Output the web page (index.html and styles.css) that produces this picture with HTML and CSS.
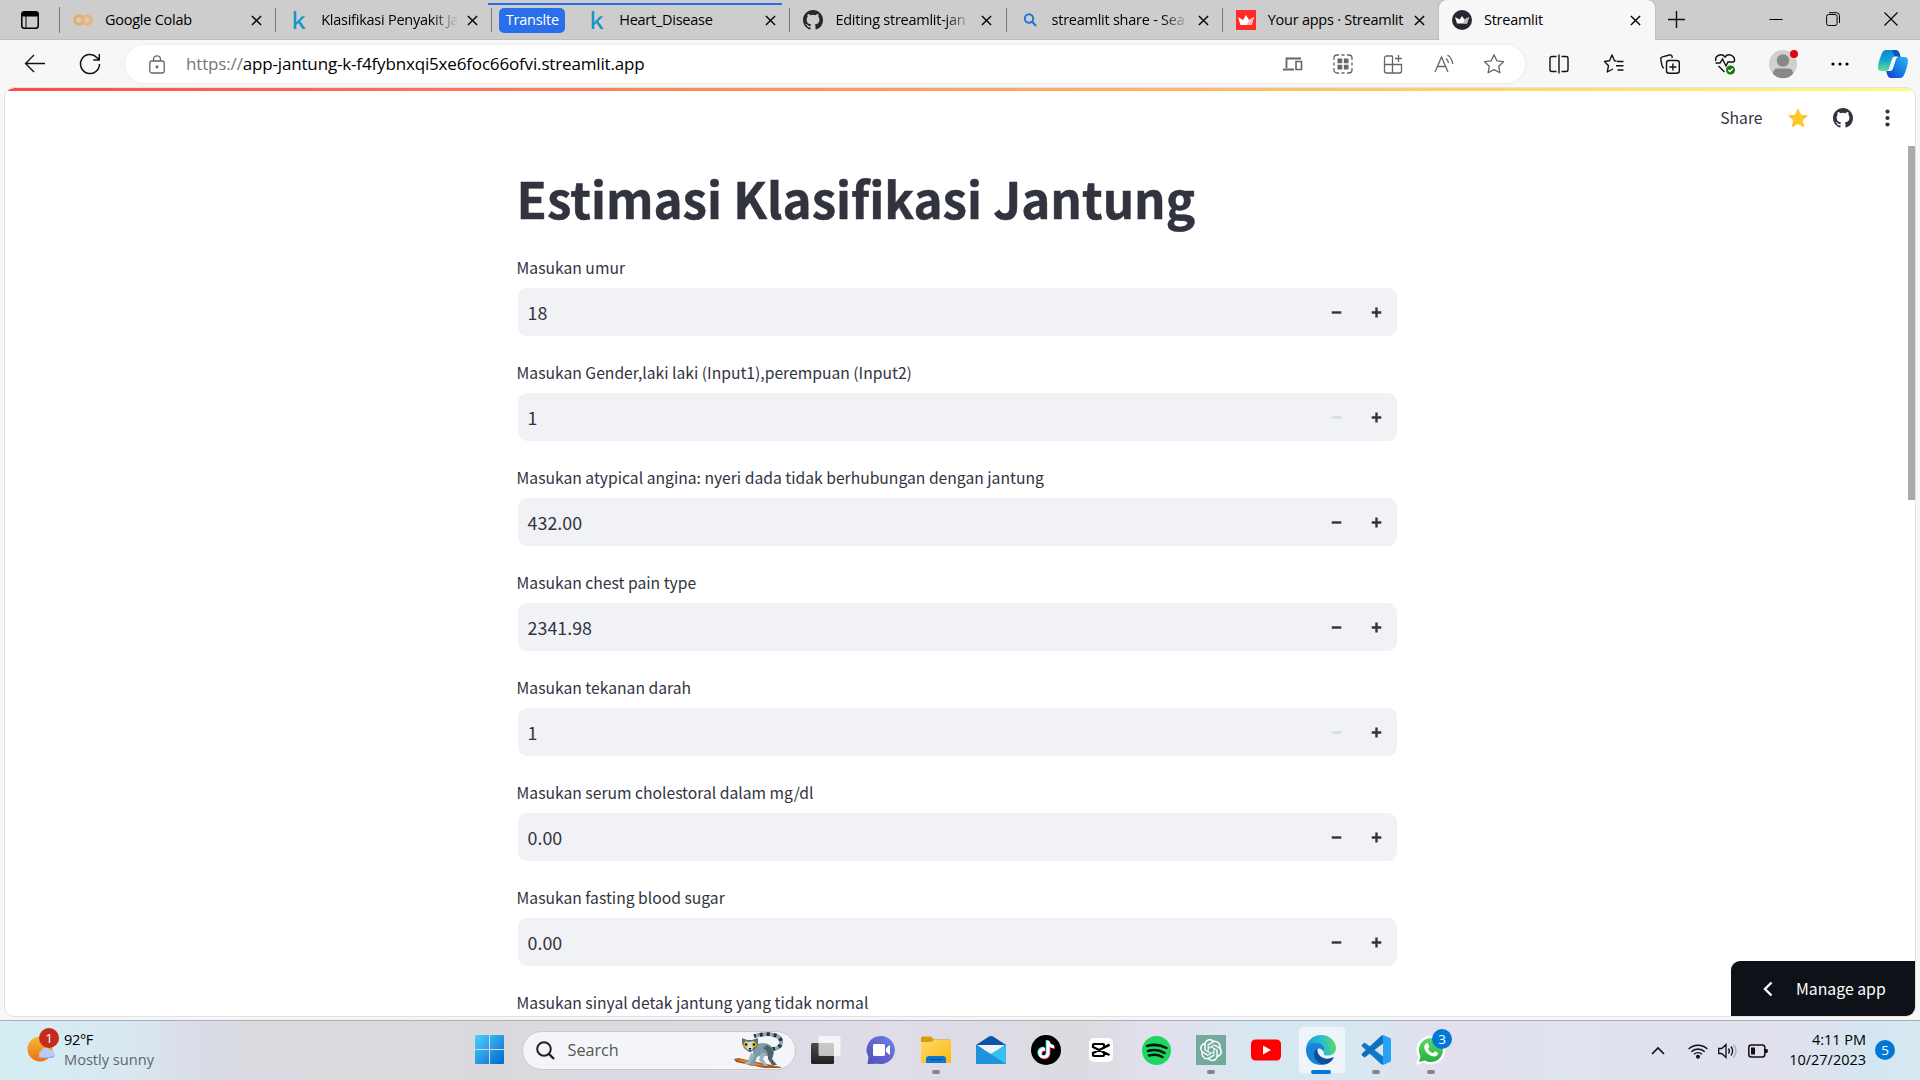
FILE: index.html
```html
<!DOCTYPE html>
<html lang="id">
<head>
<meta charset="utf-8">
<title>Streamlit</title>
<link rel="stylesheet" href="styles.css">
</head>
<body>
<svg class="defs" aria-hidden="true">
  <defs>
    <symbol id="x" viewBox="0 0 12 12"><path d="M1 1l10 10M11 1L1 11" fill="none" stroke="#000" stroke-width="1.5"/></symbol>
    <symbol id="kaggle" viewBox="0 0 24 24"><path fill="#1a95c9" d="M5 0h3.400v15L16 7h4.300l-6.600 6.700L21 24h-4.200l-5.600-8-2.800 2.700V24H5z"/></symbol>
    <symbol id="github" viewBox="0 0 16 16"><path d="M8 0C3.580 0 0 3.580 0 8c0 3.540 2.290 6.530 5.470 7.590.4.070.55-.17.55-.38 0-.19-.01-.82-.01-1.490-2.010.37-2.530-.49-2.690-.94-.09-.23-.48-.94-.82-1.130-.28-.15-.68-.52-.01-.53.63-.01 1.080.58 1.230.82.72 1.210 1.870.87 2.330.66.07-.52.28-.87.51-1.070-1.780-.2-3.640-.89-3.640-3.950 0-.87.31-1.590.82-2.150-.08-.2-.36-1.020.08-2.120 0 0 .67-.21 2.200.82a7.600 7.600 0 0 1 4 0c1.530-1.040 2.200-.82 2.200-.82.44 1.100.16 1.920.08 2.120.51.56.82 1.270.82 2.150 0 3.070-1.870 3.750-3.650 3.950.29.25.54.73.54 1.480 0 1.070-.01 1.930-.01 2.200 0 .21.15.46.55.38A8.010 8.010 0 0 0 16 8c0-4.420-3.580-8-8-8z"/></symbol>
    <symbol id="minus" viewBox="0 0 12 12"><path d="M.8 6h10.400" stroke="currentColor" stroke-width="2.600"/></symbol>
    <symbol id="plus" viewBox="0 0 12 12"><path d="M.8 6h10.400M6 .6v10.800" stroke="currentColor" stroke-width="2.600"/></symbol>
    <symbol id="note" viewBox="0 0 24 24"><path d="M12.525.02c1.310-.02 2.610-.01 3.910-.02.08 1.530.63 3.090 1.750 4.170 1.120 1.110 2.700 1.620 4.240 1.790v4.030c-1.440-.05-2.890-.35-4.200-.97-.57-.26-1.100-.59-1.620-.93-.01 2.920.01 5.840-.02 8.750-.08 1.400-.54 2.790-1.350 3.940-1.310 1.920-3.580 3.170-5.910 3.210-1.430.08-2.860-.31-4.080-1.030-2.020-1.190-3.440-3.370-3.650-5.710-.02-.5-.03-1-.01-1.490.18-1.900 1.120-3.720 2.580-4.960 1.660-1.440 3.980-2.130 6.150-1.720.02 1.480-.04 2.960-.04 4.440-.99-.32-2.150-.23-3.020.37-.63.41-1.110 1.040-1.360 1.750-.21.51-.15 1.070-.14 1.610.24 1.640 1.820 3.020 3.500 2.870 1.120-.01 2.190-.66 2.770-1.610.19-.33.4-.67.41-1.060.1-1.790.06-3.570.07-5.360.01-4.030-.01-8.050.02-12.070z"/></symbol>
    <linearGradient id="gWin" x1="0" y1="0" x2="1" y2="1"><stop offset="0" stop-color="#4fd0ff"/><stop offset="1" stop-color="#0067cf"/></linearGradient>
    <linearGradient id="gChat" x1="0" y1="1" x2="1" y2="0"><stop offset="0" stop-color="#4b53bc"/><stop offset=".55" stop-color="#6a62d0"/><stop offset="1" stop-color="#5c92f0"/></linearGradient>
    <linearGradient id="gFold" x1="0" y1="0" x2="1" y2="1"><stop offset="0" stop-color="#ffd96b"/><stop offset="1" stop-color="#fbb80f"/></linearGradient>
    <linearGradient id="gSun" x1="0" y1="0" x2="0" y2="1"><stop offset="0" stop-color="#f3bd35"/><stop offset="1" stop-color="#f36c12"/></linearGradient>
    <linearGradient id="gCopA" x1="0" y1="0" x2="0" y2="1"><stop offset="0" stop-color="#0a86d8"/><stop offset=".5" stop-color="#16a8d0"/><stop offset="1" stop-color="#5fe08e"/></linearGradient>
    <linearGradient id="gCopB" x1="1" y1="0" x2="0" y2="1"><stop offset="0" stop-color="#25b9f4"/><stop offset="1" stop-color="#0b3fd0"/></linearGradient>
    <linearGradient id="gEdge" x1="0" y1=".2" x2="1" y2="0"><stop offset="0" stop-color="#1c9be0"/><stop offset=".5" stop-color="#2cc0c8"/><stop offset="1" stop-color="#67df49"/></linearGradient>
    <linearGradient id="gWa" x1="0" y1="0" x2="0" y2="1"><stop offset="0" stop-color="#5fd668"/><stop offset="1" stop-color="#24b03b"/></linearGradient>
    <linearGradient id="gTv" x2="0" y2="1"><stop stop-color="#4b4b49"/><stop offset="1" stop-color="#20201f"/></linearGradient>
  </defs>
</svg>

<header class="tabs">
  <div class="workspace"><svg width="18" height="18" viewBox="0 0 18 18"><rect x=".8" y=".8" width="16.400" height="16.400" rx="2.500" fill="none" stroke="#000" stroke-width="1.500"/><path d="M1.500 1.500h15V5h-15z" stroke="#000"/><path d="M5 5v12" stroke="#000"/></svg></div>
  <div class="tab"><i class="fav"><svg width="20" height="14" viewBox="0 0 20 14"><circle cx="6" cy="7" r="4.200" fill="none" stroke="#e8ab68" stroke-width="3"/><circle cx="14" cy="7" r="4.200" fill="none" stroke="#ebb56a" stroke-width="3"/></svg></i><span class="title">Google Colab</span><svg class="close"><use href="#x"/></svg></div>
  <div class="tab"><i class="fav"><svg width="18" height="18"><use href="#kaggle"/></svg></i><span class="title fade">Klasifikasi Penyakit Ja</span><svg class="close"><use href="#x"/></svg></div>
  <div class="group"><b class="chip">Translte</b>
    <div class="tab last"><i class="fav"><svg width="18" height="18"><use href="#kaggle"/></svg></i><span class="title">Heart_Disease</span><svg class="close"><use href="#x"/></svg></div>
  </div>
  <div class="tab"><i class="fav"><svg width="20" height="20" fill="#24292f"><use href="#github"/></svg></i><span class="title fade">Editing streamlit-jan</span><svg class="close"><use href="#x"/></svg></div>
  <div class="tab"><i class="fav"><svg width="14" height="14" viewBox="0 0 14 14" fill="none" stroke="#1a78cf" stroke-width="2"><circle cx="6" cy="5.500" r="4.200"/><path d="M9 8.500l4 4.500"/></svg></i><span class="title fade">streamlit share - Sea</span><svg class="close"><use href="#x"/></svg></div>
  <div class="tab last"><i class="fav"><svg width="20" height="20" viewBox="0 0 20 20"><path fill="#ff2b2b" d="M0 0h20v20H0z"/><path fill="#fff" d="M2 7l5 3 3-5 3 5 5-3-2.500 8h-11z"/><path fill="#ffb9b9" d="M13 10l5-3-2.500 8H11z"/></svg></i><span class="title">Your apps · Streamlit</span><svg class="close"><use href="#x"/></svg></div>
  <div class="tab active"><i class="fav"><svg width="20" height="20" viewBox="0 0 20 20"><circle cx="10" cy="10" r="10" fill="#262730"/><path fill="#fff" d="M3 7l4.500 2.500L10 6l2.500 3.500L17 7l-2 6.500H5z"/><path fill="#bbb" d="M12.500 9.500L17 7l-2 6.500h-4z"/></svg></i><span class="title">Streamlit</span><svg class="close"><use href="#x"/></svg></div>
  <svg class="newtab" width="17" height="17" viewBox="0 0 17 17"><path d="M8.500 0v17M0 8.500h17" stroke="#111" stroke-width="1.400"/></svg>
  <div class="winctl">
    <svg width="14" height="14" viewBox="0 0 14 14"><path d="M.5 7.500h13" stroke="#000"/></svg>
    <svg width="14" height="14" viewBox="0 0 14 14" fill="none" stroke="#000"><rect x=".6" y="2.500" width="10.500" height="11" rx="2"/><path d="M3 .7h7.500a3 3 0 0 1 3 3V11"/></svg>
    <svg width="14" height="14" viewBox="0 0 14 14"><path d="M.5.500l13 13m0-13l-13 13" stroke="#000" stroke-width="1.100"/></svg>
  </div>
</header>

<nav class="toolbar">
  <div class="navbtns">
    <svg width="22" height="20" viewBox="0 0 22 20" fill="none" stroke="#111" stroke-width="1.400"><path d="M21 9.500H1.500M10 1L1.500 9.500 10 18"/></svg>
    <svg width="22" height="22" viewBox="0 0 22 22" fill="none" stroke="#111" stroke-width="1.500"><path d="M20.500 11a9.500 9.500 0 1 1-2.700-6.600l2 2M20.300 1v6h-6"/></svg>
  </div>
  <div class="address">
    <svg class="lock" width="16" height="19" viewBox="0 0 16 19" fill="none" stroke="#666" stroke-width="1.300"><rect x=".8" y="6" width="14.400" height="12" rx="2"/><path d="M4.500 6V4.300a3.500 3.500 0 0 1 7 0V6"/><circle cx="8" cy="12" r=".8" fill="#555"/></svg>
    <span class="url"><span class="scheme">https://</span>app-jantung-k-f4fybnxqi5xe6foc66ofvi.streamlit.app</span>
    <div class="pillicons">
      <svg viewBox="0 0 20 20"><path d="M18 4.500H3.500v9.500M0 15.500h11" stroke-width="1.800"/><path d="M13 7.500h5.500v8H13z" stroke-width="1.600"/></svg>
      <svg viewBox="0 0 20 20"><path d="M1 6V4a3 3 0 0 1 3-3h2M8.500 1h3M14 1h2a3 3 0 0 1 3 3v2M19 8.500v3M19 14v2a3 3 0 0 1-3 3h-2M11.500 19h-3M6 19H4a3 3 0 0 1-3-3v-2M1 11.500v-3"/><path d="M4.500 4.500h4.700v4.700H4.500zM10.800 4.500h4.700v4.700h-4.700zM4.500 10.800h4.700v4.700H4.500zM10.800 10.800h4.700v4.700h-4.700z" fill="#666" stroke="none"/></svg>
      <svg viewBox="0 0 20 20"><path d="M9.500 2H3.500A2 2 0 0 0 1.500 4v13a2 2 0 0 0 2 2h13a2 2 0 0 0 2-2v-6.500H1.500M9.500 2v17M15.500 1v7M12 4.500h7"/></svg>
      <svg viewBox="0 0 20 20"><path d="M1 18L7.500 3 14 18M3.500 12.500h8M12 4.500q2 1.500 2.500 4.500M13.500 1q4.500 3 5.300 9"/></svg>
      <svg viewBox="0 0 20 20"><path stroke-linejoin="round" d="M10 .8l2.900 6 6.600.9-4.800 4.500 1.200 6.600L10 15.600l-5.900 3.200 1.200-6.600L.5 7.700l6.600-.9z"/></svg>
    </div>
  </div>
  <div class="tools">
    <svg viewBox="0 0 20 20"><path d="M7.500 2.500H3a2 2 0 0 0-2 2v11a2 2 0 0 0 2 2h4.500M12.500 2.500H17a2 2 0 0 1 2 2v11a2 2 0 0 1-2 2h-4.500M10 .5v19"/></svg>
    <svg viewBox="0 0 20 20"><path stroke-linejoin="round" d="M12.500 7L10.500 6.700 8 1 5.500 6.700.5 7.500l4 4.200L3.300 18 9 15M13 7.500h6.500M12 11.800h7.500M13.500 16h6"/></svg>
    <svg viewBox="0 0 20 20"><path d="M4 14a3 3 0 0 1-2-2.500L.8 5.300a2 2 0 0 1 1.600-2.400L9.500 1a2 2 0 0 1 2.500 1.500l.3 1.500"/><rect x="6.500" y="6.500" width="12.800" height="12.800" rx="2.500"/><path d="M12.900 9.500v7M9.400 13h7"/></svg>
    <svg viewBox="0 0 20 20"><path d="M.5 9h4.500l2.500-4 3.500 7 2-4h6M.8 7C-.5 1 7-1 10 3c3-4 11-2 9.200 5M3.500 12l6 6"/><circle cx="15.500" cy="16" r="4.500" fill="#107c10" stroke="none"/><path d="M13.300 16l1.700 1.600 2.800-3" stroke="#fff"/></svg>
  </div>
  <span class="avatar"><svg width="28" height="28" viewBox="0 0 28 28"><circle cx="14" cy="14" r="14" fill="#d2d0ce"/><circle cx="14" cy="10.500" r="6.200" fill="#8a8886"/><path d="M4 24q0-5.500 5-5.500h10q5 0 5 5.500a14 14 0 0 1-20 0z" fill="#8a8886"/></svg><i></i></span>
  <svg class="dots" width="18" height="4" viewBox="0 0 18 4"><circle cx="2" cy="2" r="1.600"/><circle cx="9" cy="2" r="1.600"/><circle cx="16" cy="2" r="1.600"/></svg>
  <svg class="copilot" width="30" height="28" viewBox="0 0 30 28"><path fill="url(#gCopA)" d="M8 0h9q4 0 5 5l.5 2h-5q-2.500 0-3.500 3l-2.500 8q-1 3-4 3H3.500Q0 21 0 17.500 0 13 3.500 4 5 0 8 0z"/><path fill="#0b55b8" d="M14.500 0H17q4 0 5 5l.5 2h-4q-2.500-.5-3-3.500z"/><path fill="url(#gCopB)" d="M22 28h-9q-3 0-4-4l-.8-3q2.800-.3 3.800-3.500l2.700-8Q16 7 19 7h7.500Q30 7 30 11q0 4-3.500 13Q25 28 22 28z"/><path fill="#f7f7f7" d="M14 9q.8-2.500 3-2.500h3.500q-2 .8-2.800 3.500l-2.700 8.500q-.8 2.500-3 2.500H8.500q2-.5 2.800-3z"/></svg>
</nav>

<main class="page">
  <div class="rainbow"></div>
  <div class="appbar">
    <span>Share</span>
    <svg width="20" height="20" viewBox="0 0 20 20"><path fill="#ffc62b" stroke="#ffc62b" stroke-linejoin="round" d="M10 1l2.700 6.200 6.500.6-4.900 4.400 1.400 6.500L10 15.400l-5.700 3.300 1.400-6.500L.8 7.800l6.500-.6z"/></svg>
    <svg width="20" height="20" fill="#31333f"><use href="#github"/></svg>
    <svg width="5" height="18" viewBox="0 0 5 18" fill="#31333f"><circle cx="2.500" cy="2.500" r="2.100"/><circle cx="2.500" cy="9" r="2.100"/><circle cx="2.500" cy="15.500" r="2.100"/></svg>
  </div>
  <div class="form">
    <h1>Estimasi Klasifikasi Jantung</h1>
    <label>Masukan umur</label>
    <div class="num"><span>18</span><svg><use href="#minus"/></svg><svg><use href="#plus"/></svg></div>
    <label>Masukan Gender,laki laki (Input1),perempuan (Input2)</label>
    <div class="num"><span>1</span><svg class="off"><use href="#minus"/></svg><svg><use href="#plus"/></svg></div>
    <label>Masukan atypical angina: nyeri dada tidak berhubungan dengan jantung</label>
    <div class="num"><span>432.00</span><svg><use href="#minus"/></svg><svg><use href="#plus"/></svg></div>
    <label>Masukan chest pain type</label>
    <div class="num"><span>2341.98</span><svg><use href="#minus"/></svg><svg><use href="#plus"/></svg></div>
    <label>Masukan tekanan darah</label>
    <div class="num"><span>1</span><svg class="off"><use href="#minus"/></svg><svg><use href="#plus"/></svg></div>
    <label>Masukan serum cholestoral dalam mg/dl</label>
    <div class="num"><span>0.00</span><svg><use href="#minus"/></svg><svg><use href="#plus"/></svg></div>
    <label>Masukan fasting blood sugar</label>
    <div class="num"><span>0.00</span><svg><use href="#minus"/></svg><svg><use href="#plus"/></svg></div>
    <label>Masukan sinyal detak jantung yang tidak normal</label>
  </div>
  <div class="scrollbar"></div>
  <div class="manage"><svg width="10" height="16" viewBox="0 0 10 16"><path d="M8.500 1.500L2 8l6.500 6.500" fill="none" stroke="#fff" stroke-width="2.400"/></svg><span>Manage app</span></div>
</main>

<footer class="taskbar">
  <div class="weather">
    <div class="sun"><svg width="30" height="30" viewBox="0 0 30 30"><circle cx="13" cy="15" r="12.500" fill="url(#gSun)"/><path d="M14 24a4 4 0 0 1 0-7 5 5 0 0 1 9-1 4.500 4.500 0 0 1 3 8z" fill="#b9cdf3"/><path d="M11 22q8 3 17-1-1 3-3 3H14q-3 0-3-2z" fill="#8fb1ee"/></svg><b class="badge red">1</b></div>
    <div class="wtext"><span>92°F</span><span class="muted">Mostly sunny</span></div>
  </div>
  <svg class="start" width="29" height="29" viewBox="0 0 29 29"><path fill="url(#gWin)" d="M1 0h13v14H0V1q0-1 1-1zM15 0h13q1 0 1 1v13H15zM0 15h14v14H1q-1 0-1-1zM15 15h14v13q0 1-1 1H15z"/></svg>
  <div class="search">
    <svg width="19" height="19" viewBox="0 0 19 19" fill="none" stroke="#222" stroke-width="2"><circle cx="8" cy="8" r="6.800"/><path d="M12.800 12.800l5.200 5.200" stroke-width="2.400"/></svg>
    <span>Search</span>
    <svg class="lemur" width="48" height="35" viewBox="0 0 48 35">
      <path d="M0 26l4-1 14 3 24 5 5 1v1H30L2 29z" fill="#a9581a"/><path d="M1 26l15 2 16 5-14-1z" fill="#e38b34"/>
      <path d="M38 16C48 16 50 7 43 3 36 0 28 1 20 3" fill="none" stroke="#8ba6b0" stroke-width="3.800"/>
      <path d="M38 16C48 16 50 7 43 3 36 0 28 1 20 3" fill="none" stroke="#22333b" stroke-width="3.800" stroke-dasharray="3 4"/>
      <path d="M19 13q8-5 15-2 6 3 6 10l-3 3-9-2-5 2-3 9h-4l3-12z" fill="#7d9ca6"/>
      <path d="M17 20l-3 8-4 3h6l5-9zM27 20l-2 7 5 6h4l-5-7 3-6z" fill="#9ab4bb"/>
      <path d="M33 12q8 3 6 11l-1 3 5 6h-5l-4-6q1-8-5-11z" fill="#4a636d"/>
      <path d="M8 10V5l5 2h5l6-2v6l-3 5-4 3h-2l-5-4z" fill="#56717c"/>
      <path d="M11 8l4 1 5-1 1 4-3 5h-4l-4-4z" fill="#d9dfdf"/>
      <circle cx="12" cy="11.500" r="2.500" fill="#e3b514"/><circle cx="20" cy="11.500" r="2.500" fill="#e3b514"/><circle cx="12" cy="11.500" r="1.100"/><circle cx="20" cy="11.500" r="1.100"/><path d="M14.500 15h3L16 17.500z"/>
    </svg>
  </div>
  <div class="apps">
    <div class="app"><svg width="30" height="30" viewBox="0 0 30 30"><rect y="8" width="23" height="21" rx="1.500" fill="url(#gTv)"/><rect x="7.500" y="1" width="22" height="20" rx="1.500" fill="#fff" opacity=".7"/></svg></div>
    <div class="app"><svg width="30" height="30" viewBox="0 0 30 30"><path d="M15 1a14 14 0 1 1-3 27.700L2 29q-1-.5-.3-1.500L2.500 22A14 14 0 0 1 15 1z" fill="url(#gChat)"/><rect x="7" y="9" width="12" height="12" rx="1.500" fill="#fff"/><path d="M20 13.500l3-3q1-.5 1 .5v8q0 1-1 .5l-3-3z" fill="#fff"/></svg></div>
    <div class="app run"><svg width="30" height="30" viewBox="0 0 30 30"><path d="M0 3q0-1.500 1.500-1.500h8.500L13 4.500h16q1 0 1 1V10H0z" fill="#dd9a06"/><path d="M0 7h10l3-2h16q1 0 1 1v22H0z" fill="url(#gFold)"/><path d="M5 28v-4q0-3 3-3h14q3 0 3 3v4z" fill="#0a78cc"/><path d="M9 24.500h12" stroke="#0b4e91" stroke-width="1.200"/></svg></div>
    <div class="app"><svg width="30" height="30" viewBox="0 0 30 30"><path d="M0 10L13 1.500q2-1 4 0L30 10v5H0z" fill="#0a55ab"/><path d="M1 10h28L15 20z" fill="#f2f2f2"/><path d="M0 10l15 9 15-9v19H0z" fill="#2ba7e8"/><path d="M15 19l15-9v19z" fill="#35c0f2"/><path d="M0 10l30 19H0z" fill="#1e92dc"/></svg></div>
    <div class="app"><svg width="30" height="30" viewBox="0 0 30 30"><circle cx="15" cy="15" r="15"/><use href="#note" x="5.300" y="5" width="18" height="18" fill="#25f4ee"/><use href="#note" x="7" y="6.500" width="18" height="18" fill="#fe2c55"/><use href="#note" x="6.200" y="5.700" width="18" height="18" fill="#fff"/></svg></div>
    <div class="app"><svg width="24" height="24" viewBox="0 0 24 24"><rect width="24" height="24" rx="5" fill="#fff"/><path d="M20.500 6.500L15 9.500V7q0-1-1-1H5q-1 0-1 1v2l16.500 8M20.500 7L4 15v2q0 1 1 1h9q1 0 1-1v-2.500" fill="none" stroke="#000" stroke-width="2.200"/></svg></div>
    <div class="app"><svg width="29" height="29" viewBox="0 0 29 29"><circle cx="14.500" cy="14.500" r="14.500" fill="#1ed760"/><path d="M5 10q10-3 19.500 2M6 15q9-2.500 16.500 2M7 19.500q7.500-2 13.500 1.500" fill="none" stroke="#06150b" stroke-width="2.500" stroke-linecap="round"/></svg></div>
    <div class="app run"><svg width="30" height="30" viewBox="0 0 30 30"><path fill="#74aa9c" d="M0 0h30v30H0z"/><path transform="translate(4 4) scale(.92)" fill="#fff" d="M22.282 9.821a5.985 5.985 0 0 0-.516-4.911 6.046 6.046 0 0 0-6.510-2.900A6.065 6.065 0 0 0 4.981 4.182a5.985 5.985 0 0 0-3.998 2.900 6.046 6.046 0 0 0 .743 7.097 5.980 5.980 0 0 0 .511 4.911 6.051 6.051 0 0 0 6.515 2.900A5.985 5.985 0 0 0 13.260 24a6.056 6.056 0 0 0 5.772-4.206 5.989 5.989 0 0 0 3.998-2.900 6.056 6.056 0 0 0-.748-7.073zm-9.022 12.608a4.476 4.476 0 0 1-2.876-1.041l.142-.080 4.778-2.758a.795.795 0 0 0 .393-.681v-6.737l2.020 1.169a.071.071 0 0 1 .038.052v5.583a4.504 4.504 0 0 1-4.495 4.494zm-9.661-4.125a4.471 4.471 0 0 1-.535-3.014l.142.085 4.783 2.758a.771.771 0 0 0 .781 0l5.843-3.369v2.332a.080.080 0 0 1-.033.062L9.740 19.950a4.499 4.499 0 0 1-6.141-1.646zM2.341 7.896a4.485 4.485 0 0 1 2.366-1.973V11.600a.766.766 0 0 0 .388.677l5.814 3.354-2.020 1.169a.076.076 0 0 1-.071 0l-4.830-2.787A4.504 4.504 0 0 1 2.341 7.872zm16.596 3.856L13.104 8.364 15.119 7.200a.076.076 0 0 1 .071 0l4.830 2.791a4.494 4.494 0 0 1-.677 8.104v-5.677a.790.790 0 0 0-.407-.667zm2.011-3.023l-.142-.085-4.774-2.782a.776.776 0 0 0-.785 0L9.409 9.230V6.897a.066.066 0 0 1 .028-.062l4.830-2.787a4.499 4.499 0 0 1 6.680 4.660zM8.307 12.863l-2.020-1.164a.080.080 0 0 1-.038-.057V6.074a4.499 4.499 0 0 1 7.376-3.454l-.142.081L8.704 5.459a.795.795 0 0 0-.393.681zm1.098-2.365l2.602-1.500 2.607 1.500v2.999l-2.597 1.500-2.607-1.500z"/></svg></div>
    <div class="app"><svg width="30" height="22" viewBox="0 0 30 22"><rect width="30" height="21" y=".5" rx="4.500" fill="#f00"/><path d="M12 6.500l8 4.500-8 4.500z" fill="#fff"/></svg></div>
    <div class="app current"><svg width="30" height="30" viewBox="0 0 30 30"><path d="M0 15C0 6 7 0 15 0c9 0 15 6.500 15 13 0 5-4 7.500-8 7.500-4.500 0-5-1.500-4-3 2-3-1-7-6-7-6 0-11 3-12 4.500z" fill="url(#gEdge)"/><path d="M0 15C1 9 6 7.500 10 8c5 0 8.500 3 8.500 7 0 1-.7 2-.7 2S15 12 11.500 14C5 18 10 29 17 29.800 6 31 0 23 0 15z" fill="#1784d8"/><path d="M11.500 13C4.500 17.500 9 28.500 17 29.800c5 0 9-3.800 10.500-6.500.5-1-.2-1.200-1-.8C19 26 10 21 11.500 13z" fill="#0c4fa0"/></svg></div>
    <div class="app run"><svg width="30" height="30" viewBox="0 0 30 30"><path d="M22 30l-2-1L1 11.500q-.8-1 0-1.800l1.800-1.600q.8-.5 1.600 0L22 21.500z" fill="#0a7bc8"/><path d="M22 0l-2 1L1 18.500q-.8 1 0 1.800l1.800 1.600q.8.500 1.600 0L22 8.500z" fill="#0f70bb"/><path d="M22 0l7 3q1 .5 1 1.500v21q0 1-1 1.500l-7 3z" fill="#26a4f2"/></svg></div>
    <div class="app run"><svg width="30" height="30" viewBox="0 0 30 30"><path d="M0 30l2.200-8A14.500 14.500 0 1 1 8 27.800z" fill="#fff"/><path d="M3 27l1.600-5.800a12 12 0 1 1 4.200 4.200z" fill="url(#gWa)"/><path d="M10 8.500q1.500-1 2.300.5l1 2.400q.2.800-1.300 2.300 1.700 3.500 5 4.500l1.500-1.800q.5-.5 3.500 1.400.3 3.700-4.300 3.700-7-1.500-9.200-7.500-.9-3.500 1.500-5.500z" fill="#fff"/></svg><b class="badge blue">3</b></div>
  </div>
  <div class="tray">
    <svg width="14" height="9" viewBox="0 0 14 9"><path d="M1 8l6-6 6 6" fill="none" stroke="#111" stroke-width="1.600"/></svg>
    <svg width="20" height="16" viewBox="0 0 20 16" fill="none" stroke="#111" stroke-width="1.400"><path d="M.6 6a13.500 13.500 0 0 1 18.800 0M3.300 8.700a9.500 9.500 0 0 1 13.400 0M6 11.300a5.600 5.600 0 0 1 8 0"/><circle cx="10" cy="13.800" r="1.300" fill="#111"/></svg>
    <svg width="20" height="16" viewBox="0 0 20 16" fill="none" stroke="#111" stroke-width="1.300"><path d="M.7 5.500h3L8 1.500v13l-4.300-4h-3zM10.500 5.500q1.800 2.500 0 5M13 3.500q3.200 4.500 0 9"/><path d="M15.500 1.500q5 6.500 0 13" stroke="#aaa"/></svg>
    <svg width="20" height="14" viewBox="0 0 20 14"><rect x=".8" y="1" width="16" height="12" rx="2.500" fill="none" stroke="#111" stroke-width="1.500"/><path d="M3 3.500h4v7H3zM17 5h1.500q1.500 0 1.500 2t-1.500 2H17z" fill="#111"/></svg>
    <div class="clock"><span>4:11 PM</span><span>10/27/2023</span></div>
    <b class="badge blue five">5</b>
  </div>
</footer>
</body>
</html>
```
FILE: styles.css
```css
* { box-sizing: border-box; }
body {
  margin: 0;
  width: 1920px;
  height: 1080px;
  overflow: hidden;
  display: flex;
  flex-direction: column;
  background: #f7f7f7;
  font-family: "Open Sans", "Noto Sans", sans-serif;
  color: #000;
}
svg { display: block; flex: none; overflow: visible; }
.defs { position: absolute; width: 0; height: 0; }

/* Tab strip */
.tabs { height: 40px; flex: none; display: flex; background: #cdcdcd; box-shadow: inset 0 -1px #bdbdbd; }
.workspace { width: 60px; padding: 11px 0 0 21px; border-right: 1px solid #777; height: 40px; border-image: linear-gradient(#0000 8px, #777 8px 32px, #0000 32px) 1; }
.tab { width: 216.200px; height: 40px; display: flex; align-items: center; padding-left: 12px; position: relative; flex: none; }
.tab::after { content: ""; position: absolute; right: 0; top: 8px; width: 1px; height: 24px; background: #777; }
.tab.last::after, .tab.active::after { display: none; }
.fav { width: 22px; display: flex; justify-content: center; flex: none; }
.title { width: 139px; margin-left: 11px; padding-bottom: 1px; font-size: 14.500px; letter-spacing: -.25px; white-space: nowrap; }
.title.fade { -webkit-mask-image: linear-gradient(90deg, #000 110px, transparent 137px); mask-image: linear-gradient(90deg, #000 110px, transparent 137px); }
.close { width: 11px; height: 11px; margin-left: 7px; }
.group { display: flex; align-items: center; width: 298px; height: 40px; padding-left: 7px; position: relative; }
.group::before { content: ""; position: absolute; left: -4px; top: 3px; width: 294px; height: 2px; background: #2a6fea; }
.group::after { content: ""; position: absolute; right: 0; top: 8px; width: 1px; height: 24px; background: #777; }
.chip { width: 66px; height: 25px; border-radius: 5px; background: #2a6fea; color: #fff; font-weight: 400; font-size: 14.500px; line-height: 23px; text-align: center; letter-spacing: -.2px; margin-right: 9px; }
.tab.active { background: #f7f7f7; border-radius: 8px 8px 0 0; box-shadow: 0 0 2px #999; clip-path: inset(0 -3px 0 -3px); }
.newtab { margin: 11px 0 0 13px; }
.winctl { display: flex; gap: 43.500px; margin: 12px 0 0 83.500px; }

/* Toolbar */
.toolbar { height: 48px; flex: none; display: flex; align-items: center; background: #f7f7f7; }
.navbtns { display: flex; gap: 33px; width: 125px; padding-left: 24px; align-items: center; }
.address { width: 1400px; height: 38px; background: #fff; border-radius: 19px; box-shadow: 0 0 3px #e3e3e3; display: flex; align-items: center; padding-left: 24px; }
.url { margin-left: 21px; padding-bottom: 2px; font-size: 17px; letter-spacing: -.16px; width: 1097px; white-space: nowrap; }
.scheme { color: #767676; }
.pillicons, .tools { display: flex; fill: none; }
.pillicons { gap: 30.200px; stroke: #666; stroke-width: 1.300; }
.pillicons svg, .tools svg { width: 20px; height: 20px; }
.tools { margin-left: 24px; gap: 35.300px; stroke: #111; stroke-width: 1.400; }
.avatar { margin-left: 34px; position: relative; }
.avatar i { position: absolute; right: -1px; top: 0; width: 8px; height: 8px; border-radius: 50%; background: #e3000f; }
.dots { margin-left: 34px; }
.copilot { margin-left: 29px; }

/* Page */
.page {
  position: relative;
  width: 1910px;
  height: 928px;
  flex: none;
  margin-left: 5px;
  background: #fff;
  border-radius: 9px;
  outline: 1px solid #e2e2e2;
  overflow: hidden;
  font-family: "Noto Sans CJK SC", sans-serif;
  color: #31333f;
}
.rainbow { height: 3px; background: linear-gradient(90deg, #ff4b4b, #ffbd68 66%, #fffd80); }
.appbar { display: flex; align-items: center; justify-content: flex-end; height: 54px; padding-right: 25px; font-size: 15.700px; }
.appbar span { padding-bottom: 1px; }
.appbar svg:nth-of-type(1) { margin-left: 25.500px; }
.appbar svg:nth-of-type(2) { margin-left: 25px; }
.appbar svg:nth-of-type(3) { margin-left: 32px; }
.form { width: 880px; margin-left: 511.600px; }
h1 { margin: 16px 0 21px; height: 74px; line-height: 74px; font-size: 49.300px; font-weight: 700; -webkit-text-stroke: .5px #31333f; white-space: nowrap; }
label { display: block; height: 26px; line-height: 24px; font-size: 15.680px; white-space: nowrap; }
.num { height: 48px; margin: 6px 0 25px 1px; border-radius: 9px; background: #f0f2f6; display: flex; align-items: center; padding: 0 15px 0 10px; font-size: 17.850px; }
.num span { flex: 1; line-height: 48px; }
.num svg { width: 11px; height: 11px; margin-left: 29px; }
.off { color: #d5dae5; }
.scrollbar { position: absolute; right: 0; top: 58px; width: 7px; height: 354px; background: #a9aaac; }
.manage { position: absolute; right: 0; bottom: 0; width: 184px; height: 55px; border-radius: 9px 0 0 0; background: #0e1117; color: #fff; display: flex; align-items: center; padding-left: 32px; font-size: 15.800px; }
.manage span { margin-left: 23px; padding-bottom: 1px; white-space: nowrap; }

/* Taskbar */
.taskbar {
  margin-top: 4px;
  height: 60px;
  flex: none;
  display: flex;
  border-top: 1px solid #a9adb4;
  background: linear-gradient(90deg, #d3edf3 0, #d9e8f2 120px, #d9dde9 190px, #dadae0 250px, #dadade 500px, #dbdae2 660px, #dedde8 900px, #dbdbe1 1080px, #e2e0ed 1160px, #d5e8f1 1270px, #d7e7f1 1350px, #e3dfee 1440px, #dfe2ef 1550px, #e1e1ee 1780px, #d4e6f0 1870px, #d6e9f1 1920px);
}
.badge { position: absolute; width: 20px; height: 20px; border-radius: 50%; color: #fff; font-weight: 400; font-size: 13.500px; line-height: 20px; text-align: center; }
.red { background: #c42b1c; }
.blue { background: #0078d7; }
.weather { display: flex; width: 475px; padding-left: 27px; }
.sun { position: relative; width: 37px; padding-top: 13px; }
.sun .badge { left: 12px; top: 7px; }
.wtext { display: flex; flex-direction: column; padding-top: 8px; font-size: 14.600px; line-height: 20px; }
.wtext span:first-child { letter-spacing: -.4px; }
.muted { color: #5d666c; }
.start { margin-top: 14px; }
.search { margin: 9.500px 0 0 17.500px; width: 274px; height: 39px; border-radius: 20px; background: #f4f5f8; border: 1px solid #c8c9cf; display: flex; align-items: center; padding-left: 13px; font-size: 16.200px; color: #555; }
.search span { margin-left: 13px; width: 166px; }
.apps { display: flex; margin-left: 3px; }
.app { width: 55px; height: 58px; position: relative; display: flex; align-items: center; justify-content: center; }
.app svg { position: relative; }
.run::after, .current::after { content: ""; position: absolute; bottom: 5px; width: 8px; height: 4px; border-radius: 2px; background: #858589; }
.current::before { content: ""; position: absolute; inset: 5px 3px 5px 4px; border-radius: 5px; background: #eef4fa; border: 1px solid #e0e8ef; }
.current::after { width: 20px; background: #0078d7; }
.app .badge { left: 28.500px; top: 8px; }
.tray { flex: 1; display: flex; align-items: center; padding-left: 192.500px; }
.tray svg:nth-child(2) { margin-left: 23px; }
.tray svg:nth-child(3) { margin-left: 10px; }
.tray svg:nth-child(4) { margin-left: 10px; }
.clock { width: 98px; display: flex; flex-direction: column; text-align: right; font-size: 14.500px; line-height: 20px; letter-spacing: -.02px; margin-top: -2px; }
.five { position: static; margin: -1px 0 0 9px; flex: none; }
```
